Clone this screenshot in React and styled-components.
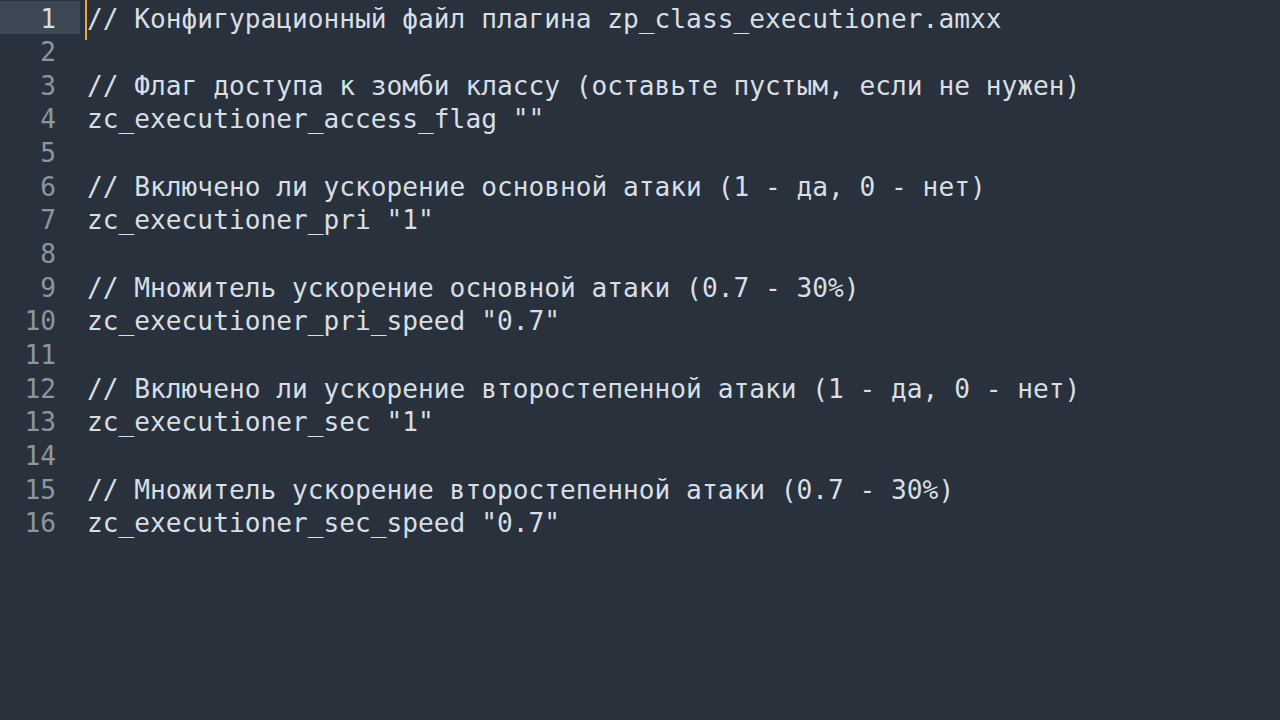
import React from "react";
import styled, { createGlobalStyle } from "styled-components";

const Global = createGlobalStyle`
  html, body { margin: 0; padding: 0; background: #29323c; }
  body { width: 1280px; height: 720px; overflow: hidden; }
`;

const Editor = styled.div`
  width: 1280px;
  height: 720px;
  background: #29323c;
  padding-top: 0.5px;
  box-sizing: border-box;
  font-family: "DejaVu Sans Mono", "Liberation Mono", monospace;
  font-size: 26.2px;
`;

const Row = styled.div`
  display: flex;
  height: 33.67px;
  line-height: 29.67px;
`;

const Gutter = styled.div`
  width: 80px;
  flex: none;
  box-sizing: border-box;
  padding: 4px 24px 0 0;
  text-align: right;
  color: ${(p) => (p.$active ? "#d6dde4" : "#8b96a0")};
  background: ${(p) => (p.$active ? "#3c4853" : "transparent")};
`;

const Code = styled.div`
  position: relative;
  padding: 4px 0 0 7px;
  color: #d8dee6;
  white-space: pre;
`;

const Caret = styled.span`
  position: absolute;
  left: 5px;
  top: -1px;
  width: 2px;
  height: 40px;
  background: #f2a23a;
`;

const lines = [
  "// Конфигурационный файл плагина zp_class_executioner.amxx",
  "",
  "// Флаг доступа к зомби классу (оставьте пустым, если не нужен)",
  'zc_executioner_access_flag ""',
  "",
  "// Включено ли ускорение основной атаки (1 - да, 0 - нет)",
  'zc_executioner_pri "1"',
  "",
  "// Множитель ускорение основной атаки (0.7 - 30%)",
  'zc_executioner_pri_speed "0.7"',
  "",
  "// Включено ли ускорение второстепенной атаки (1 - да, 0 - нет)",
  'zc_executioner_sec "1"',
  "",
  "// Множитель ускорение второстепенной атаки (0.7 - 30%)",
  'zc_executioner_sec_speed "0.7"',
];

export default function App() {
  return (
    <>
      <Global />
      <Editor>
        {lines.map((l, i) => (
          <Row key={i}>
            <Gutter $active={i === 0}>{i + 1}</Gutter>
            <Code>
              {i === 0 && <Caret />}
              {l}
            </Code>
          </Row>
        ))}
      </Editor>
    </>
  );
}
